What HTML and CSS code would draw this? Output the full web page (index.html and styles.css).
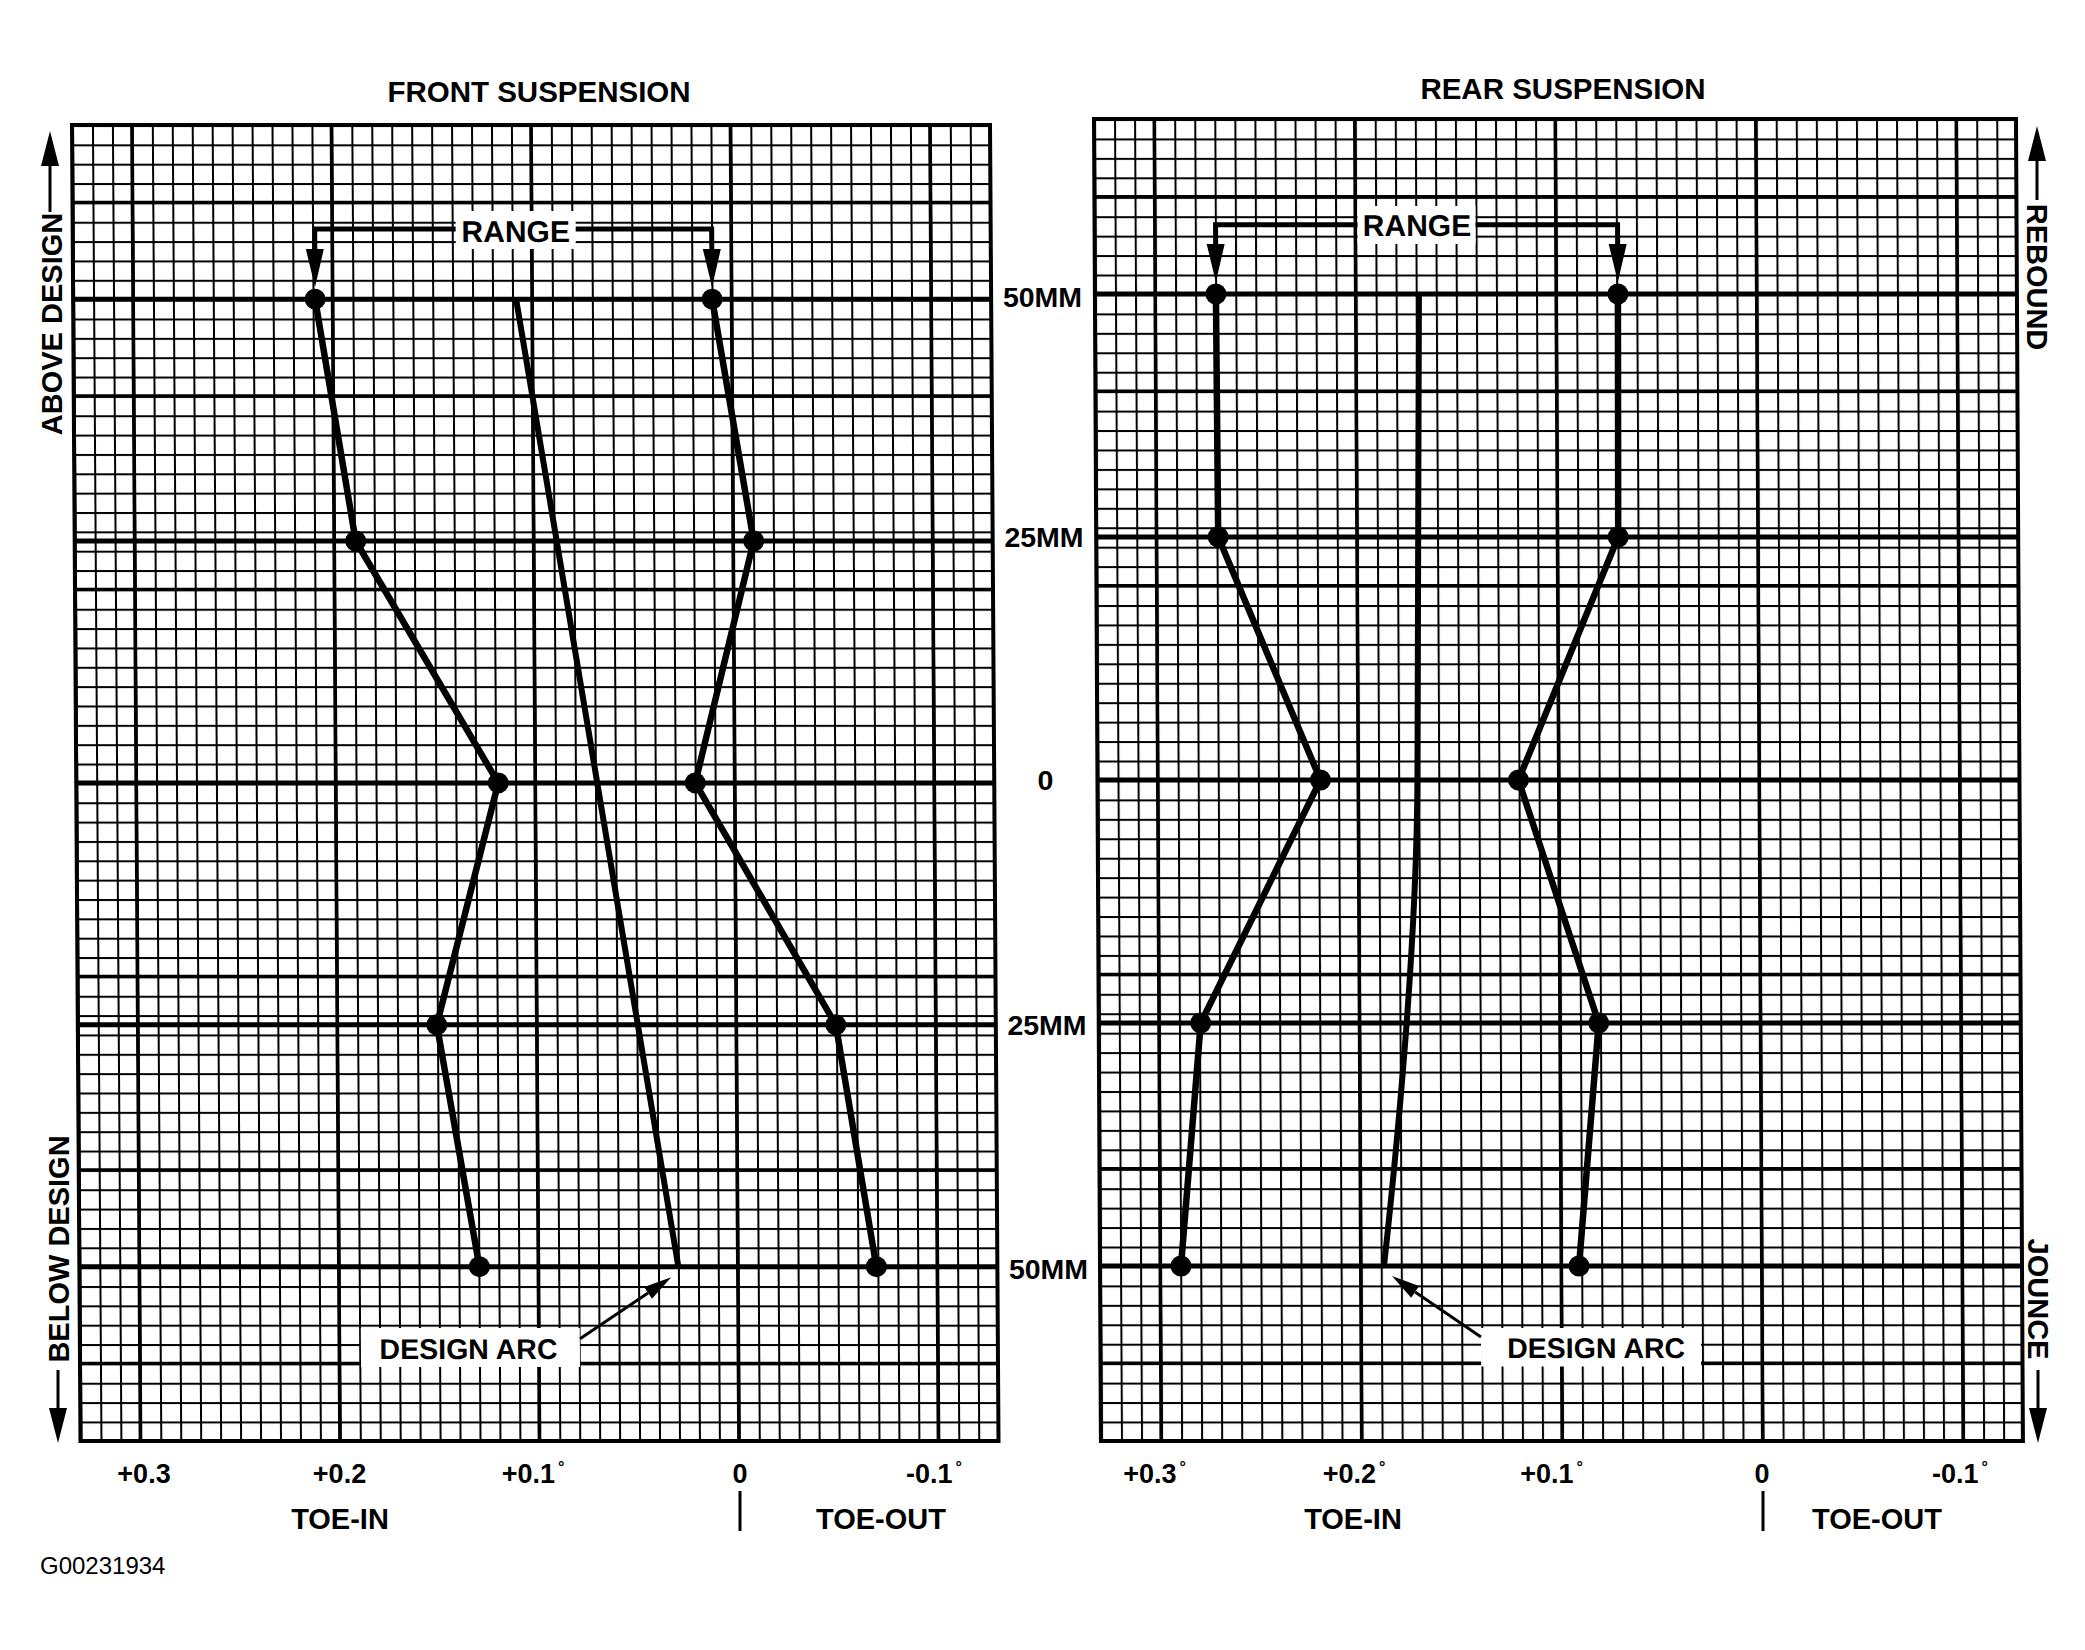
FILE: index.html
```html
<!DOCTYPE html>
<html lang="en">
<head>
<meta charset="utf-8">
<title>Front and Rear Suspension Toe Curves</title>
<link rel="stylesheet" href="styles.css">
</head>
<body>
<main class="figure">
<svg class="diagram" width="2085" height="1548" viewBox="0 0 2085 1548" xmlns="http://www.w3.org/2000/svg">
  <defs>
    <pattern id="grid-front" width="19.95" height="19.35" patternUnits="userSpaceOnUse">
      <rect class="minor" width="19.95" height="2"/>
      <rect class="minor" width="2" height="19.35"/>
    </pattern>
    <pattern id="grid-rear" width="20.05" height="19.44" patternUnits="userSpaceOnUse">
      <rect class="minor" width="20.05" height="2"/>
      <rect class="minor" width="2" height="19.44"/>
    </pattern>
  </defs>

  <text class="title" x="539" y="102">FRONT SUSPENSION</text>
  <text class="title" x="1563" y="99">REAR SUSPENSION</text>

  <!-- FRONT CHART -->
  <g class="chart" transform="translate(72 125) skewX(0.37)">
    <rect width="918" height="1316" fill="url(#grid-front)"/>
    <path class="medium" d="M0 77.4H918M0 270.9H918M0 464.4H918M0 851.4H918M0 1044.9H918M0 1238.4H918"/>
    <path class="medium" d="M59.85 0V1316M259.35 0V1316M458.85 0V1316M658.35 0V1316M857.85 0V1316"/>
    <path class="level" d="M0 174.15H918M0 416H918M0 657.9H918M0 899.8H918M0 1141.65H918"/>
    <rect class="frame" width="918" height="1316"/>

    <polyline class="curve" points="242,174.15 281,416 422,657.9 359,899.8 400,1141.65"/>
    <polyline class="curve" points="639,174.15 679,416 619,657.9 758,899.8 797,1141.65"/>
    <path class="arc" d="M443 174.15L599 1141.65"/>

    <g class="dots">
      <circle cx="242" cy="174.15" r="10.5"/>
      <circle cx="281" cy="416" r="10.5"/>
      <circle cx="422" cy="657.9" r="10.5"/>
      <circle cx="359" cy="899.8" r="10.5"/>
      <circle cx="400" cy="1141.65" r="10.5"/>
      <circle cx="639" cy="174.15" r="10.5"/>
      <circle cx="679" cy="416" r="10.5"/>
      <circle cx="619" cy="657.9" r="10.5"/>
      <circle cx="758" cy="899.8" r="10.5"/>
      <circle cx="797" cy="1141.65" r="10.5"/>
    </g>

    <rect class="label-bg" x="383" y="86" width="120" height="38"/>
    <path class="bracket" d="M242 128V104H383M503 104H639V128"/>
    <path class="head" d="M242 162L233 124L251 124Z"/>
    <path class="head" d="M639 162L630 124L648 124Z"/>
    <text class="callout" x="443" y="116.6">RANGE</text>

    <rect class="label-bg" x="281" y="1203" width="219" height="39"/>
    <text class="design" x="388.6" y="1234">DESIGN ARC</text>
    <path class="pointer" d="M500.2 1213.7L568.5 1167.9"/>
    <path class="head" d="M0 0L-28 -7L-28 7Z" transform="translate(591.8 1152.3) rotate(-33.8)"/>
  </g>

  <!-- REAR CHART -->
  <g class="chart" transform="translate(1094 119) skewX(0.3)">
    <rect width="922" height="1322" fill="url(#grid-rear)"/>
    <path class="medium" d="M0 77.8H922M0 272.2H922M0 466.6H922M0 855.4H922M0 1049.8H922M0 1244.2H922"/>
    <path class="medium" d="M60.2 0V1322M260.7 0V1322M461.2 0V1322M661.7 0V1322M862.2 0V1322"/>
    <path class="level" d="M0 175H922M0 418H922M0 661H922M0 904H922M0 1147H922"/>
    <rect class="frame" width="922" height="1322"/>

    <polyline class="curve" points="121,175 122,418 223,661 102,904 81,1147"/>
    <polyline class="curve" points="523,175 522,418 421,661 500,904 479,1147"/>
    <path class="arc" d="M324 175L320 661Q318 850 284 1147"/>

    <g class="dots">
      <circle cx="121" cy="175" r="10.5"/>
      <circle cx="122" cy="418" r="10.5"/>
      <circle cx="223" cy="661" r="10.5"/>
      <circle cx="102" cy="904" r="10.5"/>
      <circle cx="81" cy="1147" r="10.5"/>
      <circle cx="523" cy="175" r="10.5"/>
      <circle cx="522" cy="418" r="10.5"/>
      <circle cx="421" cy="661" r="10.5"/>
      <circle cx="500" cy="904" r="10.5"/>
      <circle cx="479" cy="1147" r="10.5"/>
    </g>

    <rect class="label-bg" x="263" y="87" width="118" height="38"/>
    <path class="bracket" d="M121 129V105.7H263M381 105.7H523V129"/>
    <path class="head" d="M121 163L112 125L130 125Z"/>
    <path class="head" d="M523 163L514 125L532 125Z"/>
    <text class="callout" x="322.4" y="116.7">RANGE</text>

    <rect class="label-bg" x="380.6" y="1209" width="220" height="38.5"/>
    <text class="design" x="495.7" y="1239">DESIGN ARC</text>
    <path class="pointer" d="M380.6 1218L315 1172.9"/>
    <path class="head" d="M0 0L-28 -7L-28 7Z" transform="translate(291.9 1157) rotate(-145.5)"/>
  </g>

  <!-- travel labels between charts -->
  <text class="level-label" x="1042.5" y="307">50MM</text>
  <text class="level-label" x="1044" y="547">25MM</text>
  <text class="level-label" x="1045.5" y="790">0</text>
  <text class="level-label" x="1047" y="1035">25MM</text>
  <text class="level-label" x="1048.5" y="1279">50MM</text>

  <!-- side labels -->
  <text class="side" transform="translate(61.5 324) rotate(-90)">ABOVE DESIGN</text>
  <path class="stem" d="M50 212V160"/>
  <path class="head" d="M50 131L41 166L59 166Z"/>

  <text class="side" transform="translate(68.5 1249) rotate(-90)">BELOW DESIGN</text>
  <path class="stem" d="M58 1370V1412"/>
  <path class="head" d="M58 1443L49 1408L67 1408Z"/>

  <text class="side" transform="translate(2027 277) rotate(90)">REBOUND</text>
  <path class="stem" d="M2037 200V160"/>
  <path class="head" d="M2037 126L2028 161L2046 161Z"/>

  <text class="side" transform="translate(2028 1299) rotate(90)">JOUNCE</text>
  <path class="stem" d="M2038 1370V1412"/>
  <path class="head" d="M2038 1443L2029 1408L2047 1408Z"/>

  <!-- front axis -->
  <text class="tick" x="144" y="1483">+0.3</text>
  <text class="tick" x="339.5" y="1483">+0.2</text>
  <text class="tick" x="533" y="1483">+0.1<tspan class="deg" dx="3" dy="-10">°</tspan></text>
  <text class="tick" x="740" y="1483">0</text>
  <text class="tick" x="934" y="1483">-0.1<tspan class="deg" dx="3" dy="-10">°</tspan></text>
  <text class="toe" x="340" y="1529">TOE-IN</text>
  <path class="divider" d="M740 1491V1531"/>
  <text class="toe" x="881" y="1529">TOE-OUT</text>

  <!-- rear axis -->
  <text class="tick" x="1154.5" y="1483">+0.3<tspan class="deg" dx="3" dy="-10">°</tspan></text>
  <text class="tick" x="1354" y="1483">+0.2<tspan class="deg" dx="3" dy="-10">°</tspan></text>
  <text class="tick" x="1551.5" y="1483">+0.1<tspan class="deg" dx="3" dy="-10">°</tspan></text>
  <text class="tick" x="1762" y="1483">0</text>
  <text class="tick" x="1960" y="1483">-0.1<tspan class="deg" dx="3" dy="-10">°</tspan></text>
  <text class="toe" x="1353" y="1529">TOE-IN</text>
  <path class="divider" d="M1763 1491V1531"/>
  <text class="toe" x="1877" y="1529">TOE-OUT</text>
</svg>
<p class="figure-id">G00231934</p>
</main>
</body>
</html>
```

FILE: styles.css
```css
html, body {
  margin: 0;
  padding: 0;
  background: #ffffff;
}

.figure {
  width: 2085px;
  height: 1650px;
  overflow: hidden;
  background: #ffffff;
}

.diagram {
  display: block;
}

.figure-id {
  margin: 6px 0 0 40px;
  font: 400 24px/24px "Liberation Sans", Arial, sans-serif;
  color: #000000;
}

/* grid */
.minor {
  fill: #000000;
}

.medium {
  fill: none;
  stroke: #000000;
  stroke-width: 3.4;
}

.level {
  fill: none;
  stroke: #000000;
  stroke-width: 5;
}

.frame {
  fill: none;
  stroke: #000000;
  stroke-width: 4;
}

/* plotted data */
.curve {
  fill: none;
  stroke: #000000;
  stroke-width: 6.5;
  stroke-linejoin: round;
  stroke-linecap: round;
}

.arc {
  fill: none;
  stroke: #000000;
  stroke-width: 6;
  stroke-linecap: butt;
}

.dots circle {
  fill: #000000;
}

/* callouts */
.label-bg {
  fill: #ffffff;
}

.bracket {
  fill: none;
  stroke: #000000;
  stroke-width: 5;
}

.pointer,
.stem,
.divider {
  fill: none;
  stroke: #000000;
  stroke-width: 3;
}

.head {
  fill: #000000;
}

/* text */
.diagram text {
  font-family: "Liberation Sans", Arial, Helvetica, sans-serif;
  font-weight: 700;
  fill: #000000;
  text-anchor: middle;
}

.diagram .title {
  font-size: 29.5px;
}

.diagram .callout {
  font-size: 30px;
}

.diagram .design {
  font-size: 28.5px;
}

.diagram .level-label {
  font-size: 28.5px;
}

.diagram .side {
  font-size: 29px;
}

.diagram .tick {
  font-size: 27px;
}

.diagram .deg {
  font-size: 16px;
  font-weight: 700;
}

.diagram .toe {
  font-size: 29px;
}
```
